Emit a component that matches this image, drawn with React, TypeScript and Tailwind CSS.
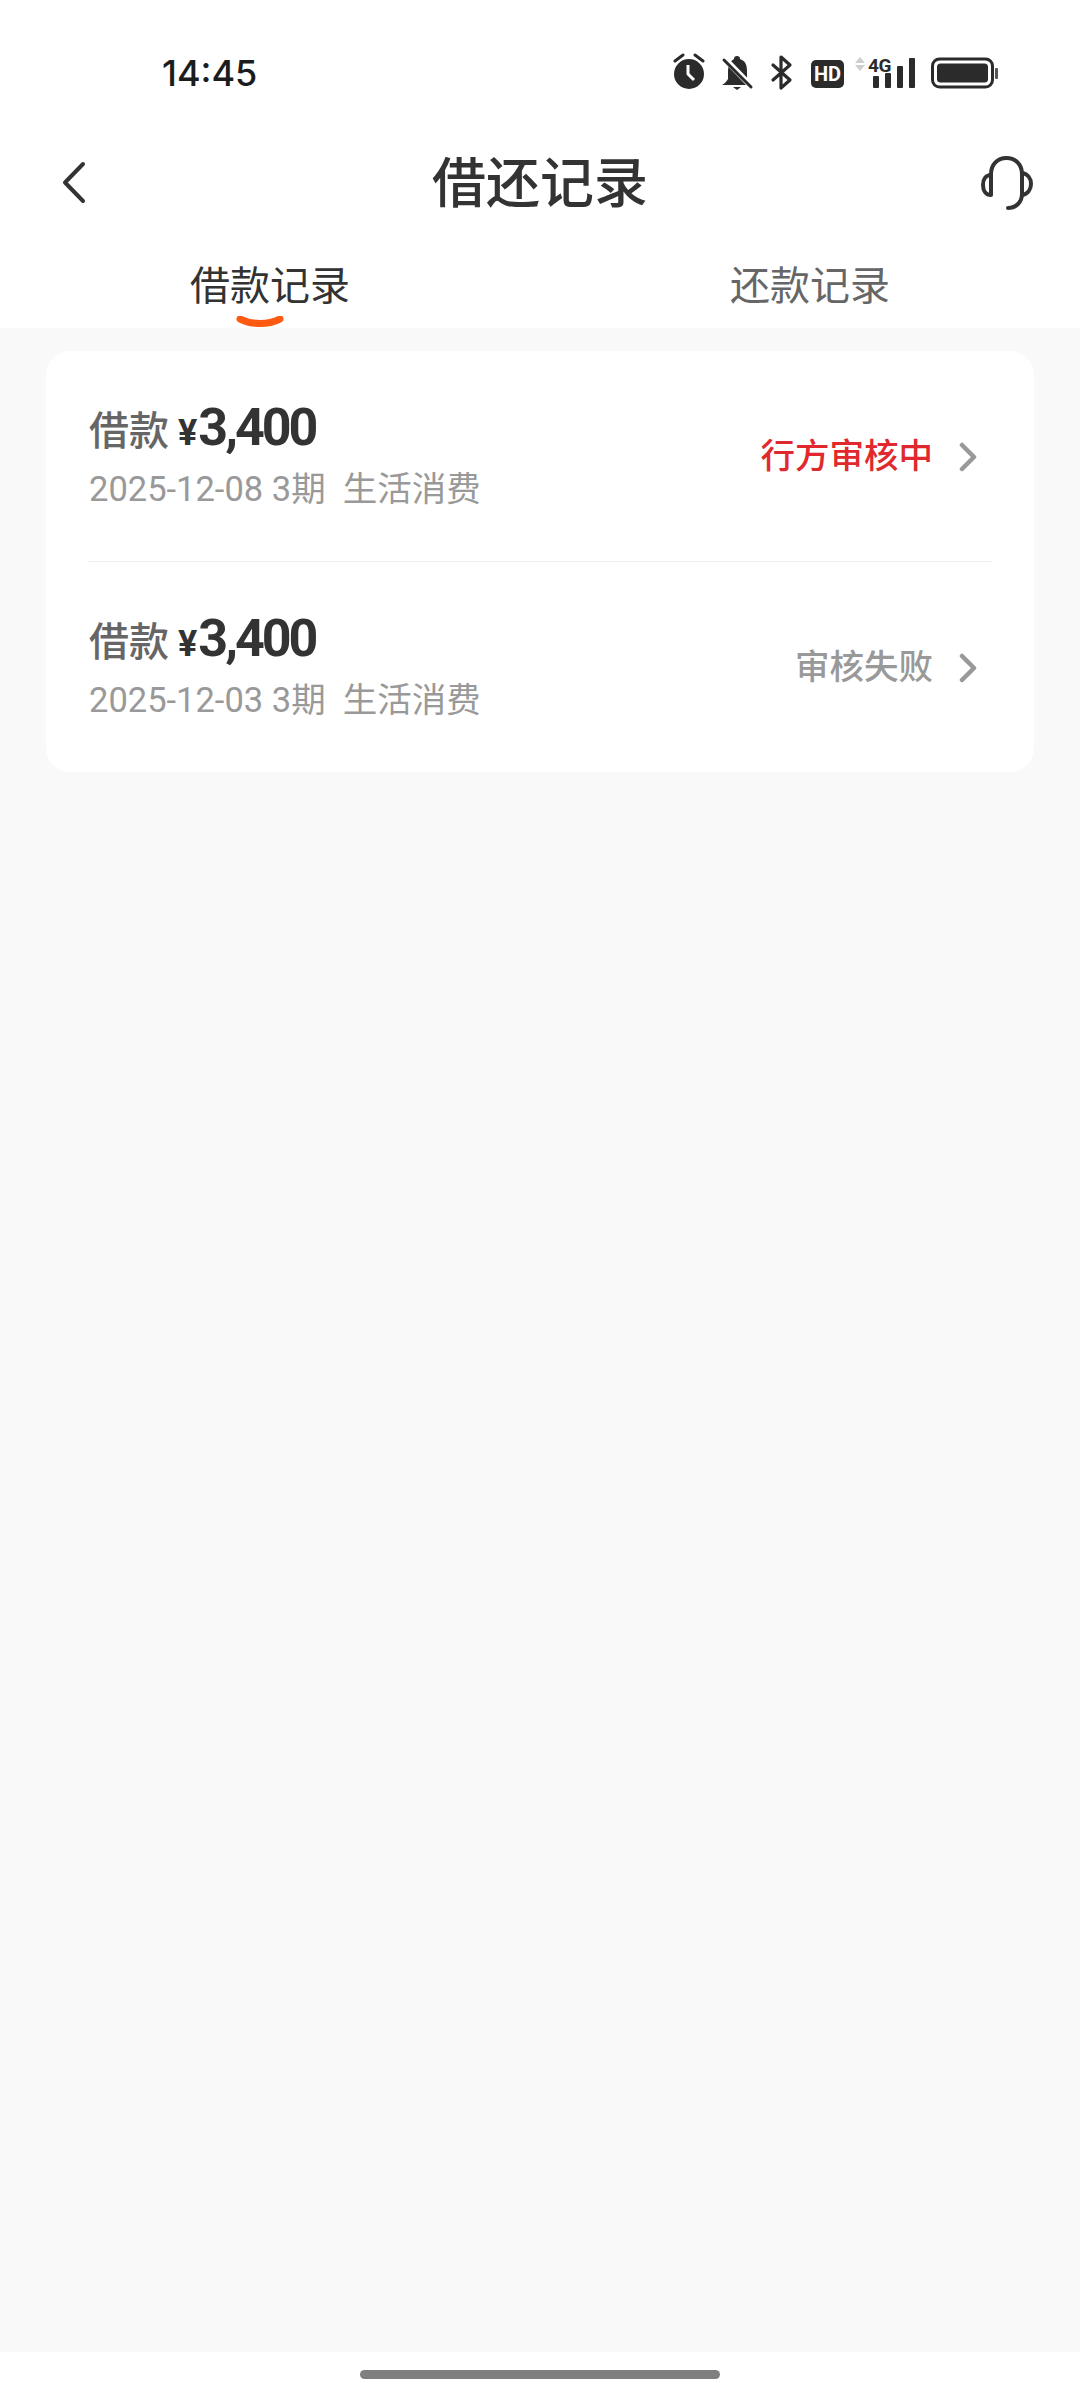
const FONT = "font-['Roboto','Noto_Sans_CJK_SC',sans-serif]";

function StatusIcons() {
  return (
    <svg width="326" height="40" viewBox="673 52 326 40" className="shrink-0">
      {/* alarm */}
      <circle cx="689" cy="73" r="15" fill="#2b2b2b" />
      <path d="M675 60l8-6M703 60l-8-6" stroke="#2b2b2b" strokeWidth="3" strokeLinecap="round" fill="none" />
      <path d="M688 64v9l6 6" stroke="#fff" strokeWidth="3" fill="none" strokeLinejoin="round" />
      {/* muted bell */}
      <path d="M737 55c2 0 3 1 3 3 6 2 7 7 7 12v8l5 6h-30c3-2 4-3 6-6v-8c0-5 2-10 6-12 0-2 1-3 3-3z" fill="#2b2b2b" />
      <path d="M733 86h8l-4 3z" fill="#2b2b2b" />
      <path d="M724 57l28 29" stroke="#fff" strokeWidth="6" />
      <path d="M724 59l27 27" stroke="#2b2b2b" strokeWidth="3" strokeLinecap="round" />
      {/* bluetooth */}
      <path d="M773 64l17 15-9 8V56l9 8-17 15" stroke="#2b2b2b" strokeWidth="3.2" fill="none" strokeLinejoin="round" strokeLinecap="round" />
      {/* hd */}
      <rect x="811" y="59" width="33" height="28" rx="5" fill="#2b2b2b" />
      <text x="827.5" y="80" textAnchor="middle" fontFamily="Roboto" fontSize="20" fontWeight="700" fill="#fff">HD</text>
      {/* 4g + signal */}
      <path d="M860 56l5 6h-10zM860 70l5-6h-10z" fill="#cfcfcf" />
      <text x="868" y="71" fontFamily="Roboto" fontSize="19" fontWeight="700" fill="#2b2b2b" letterSpacing="-0.5">4G</text>
      <rect x="873" y="75" width="6" height="12" rx="1" fill="#2b2b2b" />
      <rect x="885" y="72" width="6" height="15" rx="1" fill="#2b2b2b" />
      <rect x="897" y="65" width="6" height="22" rx="1" fill="#2b2b2b" />
      <rect x="909" y="57" width="6" height="30" rx="1" fill="#2b2b2b" />
      {/* battery */}
      <rect x="932.5" y="58" width="60" height="28" rx="7" fill="none" stroke="#2b2b2b" strokeWidth="3" />
      <rect x="937" y="62.5" width="51" height="19" rx="3.5" fill="#2b2b2b" />
      <rect x="995" y="67" width="3" height="11" rx="1" fill="#555" />
    </svg>
  );
}

function BackIcon() {
  return (
    <svg width="26" height="44" viewBox="0 0 26 44" fill="none" className="ml-[16px]">
      <path d="M22 3L4 21.5 22 40" stroke="#333" strokeWidth="4" strokeLinecap="round" strokeLinejoin="round" />
    </svg>
  );
}

function HeadsetIcon() {
  return (
    <svg width="56" height="58" viewBox="965 151 56 58" fill="none">
      <path
        d="M977 192V171c0-9 6-16 15.500-16S1008 162 1008 171v20c0 8-6 14-14 14"
        stroke="#333"
        strokeWidth="4"
        strokeLinecap="round"
      />
      <path d="M977 172c-5 0-8 4-8 10s3 10 8 10" stroke="#333" strokeWidth="4" />
      <path d="M1008 170c6 1 9 6 9 11s-3 10-9 11" stroke="#333" strokeWidth="4" />
    </svg>
  );
}

function Chevron() {
  return (
    <svg width="18" height="30" viewBox="0 0 18 30" fill="none">
      <path d="M3 3l12 12L3 27" stroke="#999" strokeWidth="4.500" strokeLinecap="round" strokeLinejoin="round" />
    </svg>
  );
}

function LoanRow({ date, status, statusColor }: { date: string; status: string; statusColor: string }) {
  return (
    <div className="h-[210px] flex items-center justify-between pl-[43px] pr-[57px]">
      <div className="flex flex-col">
        <div className="flex items-baseline h-[60px]">
          <span className="text-[40px] leading-[60px] font-medium text-[#666] mr-[9px]">借款</span>
          <span className="text-[52px] leading-[54px] font-bold text-[#333] tracking-[-3px]">
            <span className="text-[36px] mr-[4px]">¥</span>3,400
          </span>
        </div>
        <div className="text-[34.5px] leading-[44px] text-[#999] mt-[6px] whitespace-pre">{date} 3期  生活消费</div>
      </div>
      <div className="flex items-center pt-[2px]">
        <span className={`text-[34.5px] font-medium ${statusColor}`}>{status}</span>
        <span className="ml-[26px] flex"><Chevron /></span>
      </div>
    </div>
  );
}

export default function App() {
  return (
    <div className={`h-[2400px] flex flex-col bg-[#f9f9f9] ${FONT}`}>
      <div className="bg-white">
        {/* status bar */}
        <div className="h-[128px] flex items-center justify-between pl-[162px] pr-[81px] pt-[17px]">
          <span className="text-[36px] text-[#1c1c1c] font-['Inter',sans-serif] font-medium">14:45</span>
          <StatusIcons />
        </div>
        {/* title */}
        <div className="h-[110px] grid grid-cols-[1fr_auto_1fr] items-center px-[45px]">
          <BackIcon />
          <h1 className="text-[54px] font-medium text-[#333] pt-[3px]">借还记录</h1>
          <div className="flex justify-end"><HeadsetIcon /></div>
        </div>
        {/* tabs */}
        <div className="h-[90px] grid grid-cols-2 pt-[8px]">
          <div className="relative flex items-center justify-center text-[40px] text-[#333]">
            借款记录
            <svg width="48" height="12" viewBox="0 0 48 12" className="absolute left-[236px] bottom-0">
              <path d="M4 3c12 6 28 6 40 0" stroke="#ff5a12" strokeWidth="7" strokeLinecap="round" fill="none" />
            </svg>
          </div>
          <div className="flex items-center justify-center text-[40px] text-[#666]">还款记录</div>
        </div>
      </div>

      <div className="flex-1 px-[46px] pt-[23px]">
        <div className="bg-white rounded-[24px]">
          <LoanRow date="2025-12-08" status="行方审核中" statusColor="text-[#e0282e]" />
          <div className="h-[1px] bg-[#eeeeee] mx-[42px]" />
          <LoanRow date="2025-12-03" status="审核失败" statusColor="text-[#999]" />
        </div>
      </div>

      <div className="h-[48px] bg-white flex justify-center pt-[18px]">
        <div className="w-[360px] h-[9px] rounded-full bg-[#7f7f7f]" />
      </div>
    </div>
  );
}
